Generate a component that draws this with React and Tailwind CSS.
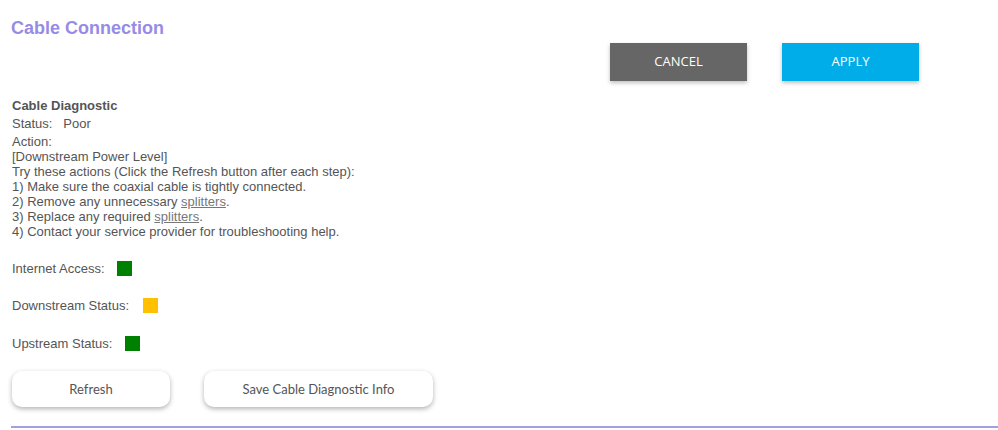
export default function App() {
  const steps = [
    "1) Make sure the coaxial cable is tightly connected.",
  ];

  return (
    <div className="w-[998px] h-[430px] bg-white overflow-hidden font-['Liberation_Sans',Arial,sans-serif] text-[#555]">
      <div className="pl-[11px] pt-[17px]">
        <h1 className="text-[18px] leading-[22px] font-bold text-[#968ce6]">Cable Connection</h1>
      </div>

      <div className="flex gap-[35px] pl-[610px] mt-[4px]">
        <button className="w-[137px] h-[38px] bg-[#666666] text-white text-[13px] font-['Open_Sans',sans-serif] shadow-[0_2px_4px_rgba(0,0,0,0.25)]">
          CANCEL
        </button>
        <button className="w-[137px] h-[38px] bg-[#00ade8] text-white text-[13px] font-['Open_Sans',sans-serif] shadow-[0_2px_4px_rgba(0,0,0,0.25)]">
          APPLY
        </button>
      </div>

      <div className="pl-[12px] mt-[17px] text-[13px] leading-[15px]">
        <div className="font-bold">Cable Diagnostic</div>
        <div className="mt-[3px]">Status:&nbsp;&nbsp;&nbsp;Poor</div>
        <div className="mt-[3px]">Action:</div>
        <div>[Downstream Power Level]</div>
        <div>Try these actions (Click the Refresh button after each step):</div>
        {steps.map((s) => (
          <div key={s}>{s}</div>
        ))}
        <div>
          2) Remove any unnecessary <span className="underline text-[#777]">splitters</span>.
        </div>
        <div>
          3) Replace any required <span className="underline text-[#777]">splitters</span>.
        </div>
        <div>4) Contact your service provider for troubleshooting help.</div>

        <div className="flex items-center mt-[22px] h-[15px]">
          <span>Internet Access:</span>
          <span className="ml-[12px] w-[15px] h-[15px] bg-[#008000]" />
        </div>
        <div className="flex items-center mt-[22px] h-[15px]">
          <span>Downstream Status:</span>
          <span className="ml-[14px] w-[15px] h-[15px] bg-[#ffc000]" />
        </div>
        <div className="flex items-center mt-[23px] h-[15px]">
          <span>Upstream Status:</span>
          <span className="ml-[13px] w-[15px] h-[15px] bg-[#008000]" />
        </div>

        <div className="flex gap-[34px] mt-[20px]">
          <button className="w-[158px] h-[36px] rounded-[10px] bg-white text-[13px] text-[#555] font-['Lato',sans-serif] shadow-[0_2px_5px_rgba(0,0,0,0.3)]">
            Refresh
          </button>
          <button className="w-[229px] h-[36px] rounded-[10px] bg-white text-[13px] text-[#555] font-['Lato',sans-serif] shadow-[0_2px_5px_rgba(0,0,0,0.3)]">
            Save Cable Diagnostic Info
          </button>
        </div>
      </div>

      <div className="ml-[11px] mt-[19px] h-[2px] bg-[#a49ee2]" />
    </div>
  );
}
